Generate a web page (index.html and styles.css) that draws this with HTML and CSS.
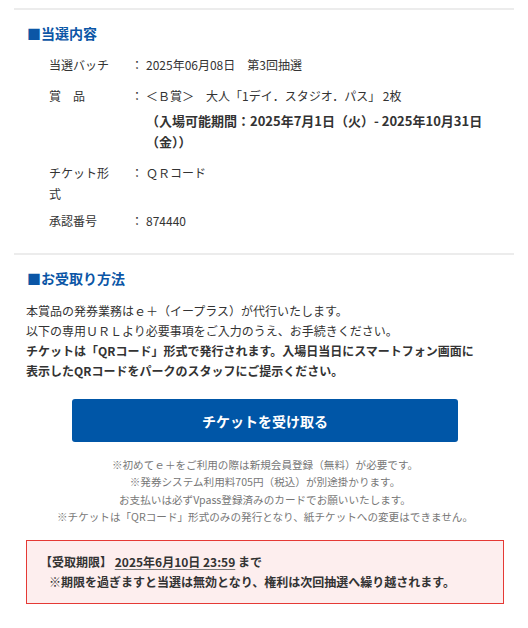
FILE: index.html
```html
<!DOCTYPE html>
<html lang="ja">
<head>
<meta charset="utf-8">
<title>当選内容</title>
<link rel="stylesheet" href="styles.css">
</head>
<body>
<div class="page">
  <section class="section section-prize">
    <h2 class="heading">■当選内容</h2>
    <div class="details">
      <div class="row">
        <div class="label">当選バッチ</div>
        <div class="colon">：</div>
        <div class="value">2025年06月08日　第3回抽選</div>
      </div>
      <div class="row">
        <div class="label">賞　品</div>
        <div class="colon">：</div>
        <div class="value">
          <div>＜Ｂ賞＞　大人「1デイ．スタジオ．パス」 2枚</div>
          <div class="period">（入場可能期間：2025年7月1日（火）- 2025年10月31日<br>（金））</div>
        </div>
      </div>
      <div class="row row-tight">
        <div class="label">チケット形式</div>
        <div class="colon">：</div>
        <div class="value">ＱＲコード</div>
      </div>
      <div class="row">
        <div class="label">承認番号</div>
        <div class="colon">：</div>
        <div class="value">874440</div>
      </div>
    </div>
  </section>
  <section class="section section-receive">
    <h2 class="heading">■お受取り方法</h2>
    <p class="lead">本賞品の発券業務はｅ＋（イープラス）が代行いたします。<br>以下の専用ＵＲＬより必要事項をご入力のうえ、お手続きください。<br><strong>チケットは「QRコード」形式で発行されます。入場日当日にスマートフォン画面に<br>表示したQRコードをパークのスタッフにご提示ください。</strong></p>
    <div class="btn-wrap"><a class="btn" href="#">チケットを受け取る</a></div>
    <p class="notes">※初めてｅ＋をご利用の際は新規会員登録（無料）が必要です。<br>※発券システム利用料705円（税込）が別途掛かります。<br>お支払いは必ずVpass登録済みのカードでお願いいたします。<br>※チケットは「QRコード」形式のみの発行となり、紙チケットへの変更はできません。</p>
    <div class="deadline">
      <div>【受取期限】 <span class="date">2025年6月10日 23:59</span> まで</div>
      <div class="deadline-note">※期限を過ぎますと当選は無効となり、権利は次回抽選へ繰り越されます。</div>
    </div>
  </section>
</div>
</body>
</html>
```
FILE: styles.css
```css
* { box-sizing: border-box; }
html, body { margin: 0; padding: 0; background: #fff; }
body {
  font-family: "Noto Sans CJK JP", "Noto Sans", sans-serif;
  font-size: 12px;
  color: #333;
}
.page { padding: 8px 14px 0; }
.section {
  border-top: 2px solid #ececec;
  padding: 13px 10px 16px 12px;
}
.section-prize { padding-bottom: 17px; }
.heading {
  margin: 0;
  padding-left: 1px;
  font-size: 14px;
  line-height: 20px;
  font-weight: bold;
  color: #0b56a6;
}
.details {
  margin: 6px 0 0 23px;
}
.row {
  display: flex;
  padding: 5px 0;
  line-height: 21px;
}
.row-tight { padding-bottom: 1px; }
.label { width: 64px; margin-right: 18px; flex: none; }
.colon { width: 12px; flex: none; }
.value { margin-left: 3px; flex: 1; }
.period {
  margin-top: 4px;
  font-size: 13px;
  font-weight: bold;
}
.lead {
  margin: 13px 0 0;
  line-height: 20px;
}
.lead strong { font-weight: bold; }
.btn-wrap {
  display: flex;
  justify-content: center;
  margin-top: 18px;
}
.btn {
  display: flex;
  align-items: center;
  justify-content: center;
  width: 386px;
  height: 43px;
  background: #0056a7;
  color: #fff;
  border-radius: 3px;
  font-size: 14px;
  font-weight: bold;
  text-decoration: none;
}
.notes {
  margin: 14px 0 0;
  text-align: center;
  font-size: 10.6px;
  line-height: 17.3px;
  color: #777;
}
.deadline {
  margin-top: 15px;
  border: 1px solid #e53935;
  background: #fdeeee;
  padding: 11px 13px;
  font-weight: bold;
  line-height: 20px;
}
.date {
  text-decoration: underline;
  text-decoration-color: #777;
  text-underline-offset: 2px;
}
.deadline-note { padding-left: 9px; }
```
